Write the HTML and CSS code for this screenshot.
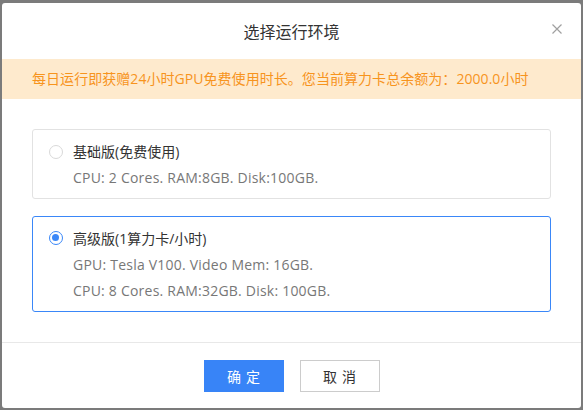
FILE: index.html
```html
<!DOCTYPE html>
<html lang="zh-CN">
<head>
<meta charset="utf-8">
<title>选择运行环境</title>
<link rel="stylesheet" href="styles.css">
</head>
<body>
<div class="dialog">
  <div class="dialog-header">
    <span class="dialog-title">选择运行环境</span>
    <span class="dialog-close">
      <svg width="10" height="10" viewBox="0 0 10 10"><path d="M0.5 0.5 L9.5 9.5 M9.5 0.5 L0.5 9.5" stroke="#a0a0a0" stroke-width="1.2" fill="none"/></svg>
    </span>
  </div>
  <div class="notice">每日运行即获赠24小时GPU免费使用时长。您当前算力卡总余额为：2000.0小时</div>
  <div class="dialog-body">
    <div class="option">
      <span class="radio"></span>
      <div class="option-label">基础版(免费使用)</div>
      <div class="option-detail">CPU: 2 Cores. RAM:8GB. Disk:100GB.</div>
    </div>
    <div class="option option-selected">
      <span class="radio radio-checked"></span>
      <div class="option-label">高级版(1算力卡/小时)</div>
      <div class="option-detail">GPU: Tesla V100. Video Mem: 16GB.</div>
      <div class="option-detail">CPU: 8 Cores. RAM:32GB. Disk: 100GB.</div>
    </div>
  </div>
  <div class="dialog-footer">
    <button class="btn btn-primary">确定</button>
    <button class="btn btn-default">取消</button>
  </div>
</div>
</body>
</html>
```
FILE: styles.css
```css
html, body {
  margin: 0;
  padding: 0;
}
body {
  width: 583px;
  height: 410px;
  background: #7b7b7b;
  font-family: "Open Sans", "Noto Sans CJK SC", sans-serif;
  box-sizing: border-box;
  padding: 3px 2px 2px 2px;
  overflow: hidden;
}
.dialog {
  background: #fff;
  border-radius: 3px;
  height: 405px;
  display: flex;
  flex-direction: column;
}
.dialog-header {
  height: 56px;
  position: relative;
  display: flex;
  align-items: center;
  justify-content: center;
}
.dialog-title {
  font-size: 16px;
  color: #333;
  line-height: 20px;
  margin-top: 2px;
}
.dialog-close {
  position: absolute;
  right: 19px;
  top: 21px;
  width: 10px;
  height: 10px;
  display: flex;
}
.notice {
  height: 40px;
  background: #feeacd;
  color: #f7941d;
  font-size: 14px;
  line-height: 40px;
  padding-left: 30px;
  letter-spacing: 0.05px;
}
.dialog-body {
  padding: 30px 30px 0 30px;
  display: flex;
  flex-direction: column;
  gap: 17px;
  height: 244px;
  box-sizing: border-box;
  border-bottom: 1px solid #e8e8e8;
}
.option {
  position: relative;
  border: 1px solid #e2e2e2;
  border-radius: 3px;
  padding: 9px 10px 7px 40px;
}
.option-selected {
  border-color: #3a87f8;
}
.radio {
  position: absolute;
  left: 16px;
  top: 15px;
  width: 14px;
  height: 14px;
  box-sizing: border-box;
  border: 1px solid #d9d9d9;
  border-radius: 50%;
  background: #fff;
}
.radio-checked {
  border: 1.5px solid #3a87f8;
  top: 14px;
}
.radio-checked::after {
  content: "";
  position: absolute;
  left: 2px;
  top: 2px;
  width: 7px;
  height: 7px;
  border-radius: 50%;
  background: #3a87f8;
}
.option-label {
  font-size: 14px;
  line-height: 26px;
  color: #333;
}
.option-detail {
  font-size: 14px;
  line-height: 26px;
  color: #777;
  letter-spacing: 0.22px;
}
.dialog-footer {
  display: flex;
  justify-content: center;
  gap: 16px;
  padding-top: 17px;
}
.btn {
  width: 80px;
  height: 32px;
  font-family: "Noto Sans CJK SC", sans-serif;
  font-size: 14px;
  letter-spacing: 5px;
  text-indent: 5px;
  border-radius: 0;
  cursor: pointer;
  padding: 0;
}
.btn-primary {
  background: #3884f7;
  border: 1px solid #3884f7;
  color: #fff;
}
.btn-default {
  background: #fff;
  border: 1px solid #cccccc;
  color: #333;
}
```
